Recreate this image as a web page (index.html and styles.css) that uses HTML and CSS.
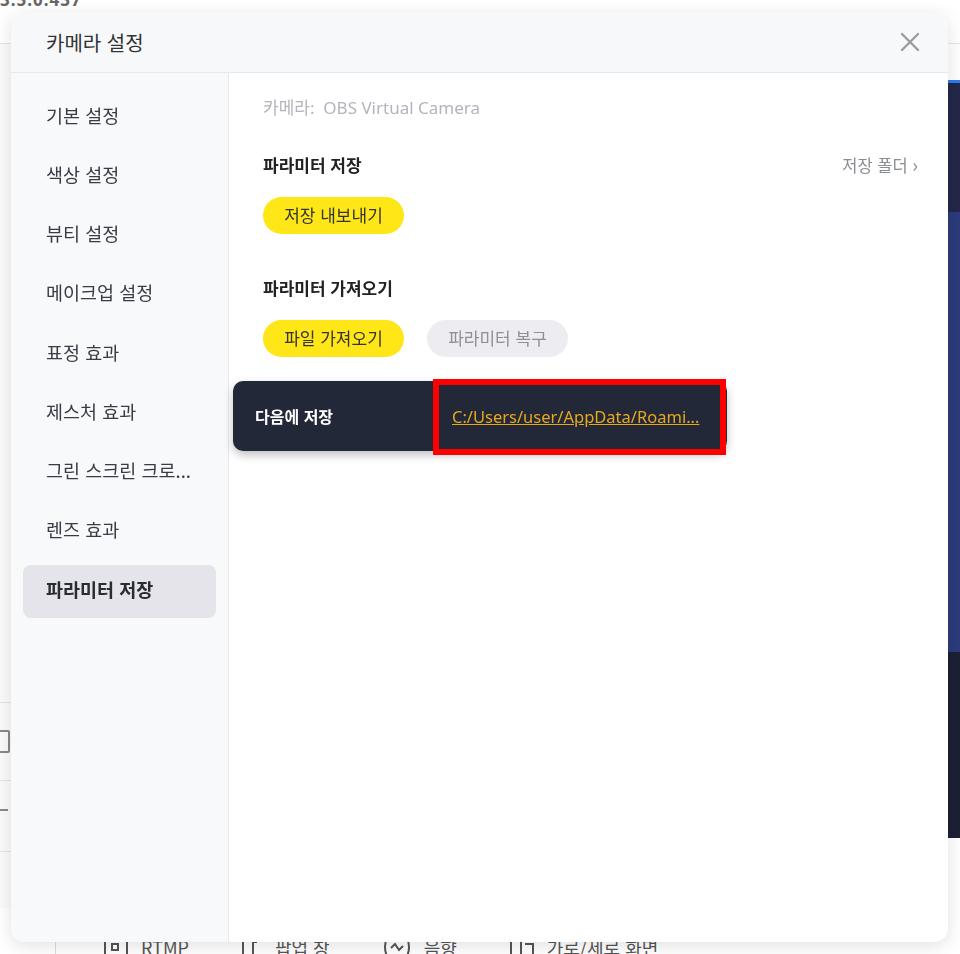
FILE: index.html
```html
<!DOCTYPE html>
<html lang="ko">

<head>
    <meta charset="UTF-8">
    <meta name="viewport" content="width=device-width, initial-scale=1.0">
    <title>카메라 설정</title>
    <link rel="stylesheet" href="styles.css">
</head>

<body>
    <!-- App behind the dialog -->
    <div class="app">
        <div class="app-top">
            <span class="version">3.5.0.437</span>
        </div>
        <div class="app-main">
            <div class="app-left">
                <div class="left-row check-row"><span class="check"></span></div>
                <div class="left-row dash-row"><span class="dash"></span></div>
                <div class="left-row"></div>
            </div>
            <div class="preview">
                <div class="preview-top"></div>
                <div class="preview-mid"></div>
                <div class="preview-low"></div>
            </div>
        </div>
        <div class="app-bottom">
            <span class="tool">
                <svg width="26" height="22" viewBox="0 0 26 22"><path d="M2 2 V20 H24 V2 M9 8 H15 V14 H9 Z" fill="none" stroke="#555" stroke-width="2" /></svg>
                RTMP
            </span>
            <span class="tool">
                <svg width="22" height="22" viewBox="0 0 22 22"><path d="M2 2 V20 M12 2 V20 M12 6 H16" fill="none" stroke="#555" stroke-width="2" /></svg>
                팝업 창
            </span>
            <span class="tool">
                <svg width="30" height="22" viewBox="0 0 30 22"><path d="M5 2 Q1 11 5 20 M25 2 Q29 11 25 20 M9 12 L13 8 L17 14 L21 10" fill="none" stroke="#555" stroke-width="2" /></svg>
                음향
            </span>
            <span class="tool">
                <svg width="26" height="22" viewBox="0 0 26 22"><path d="M2 2 V20 H12 V2 M16 8 H24 V20" fill="none" stroke="#555" stroke-width="2" /></svg>
                가로/세로 화면
            </span>
        </div>
    </div>

    <!-- Camera settings dialog -->
    <div class="modal">
        <div class="modal-header">
            <span class="modal-title">카메라 설정</span>
            <button class="close-btn" aria-label="닫기">
                <svg width="20" height="20" viewBox="0 0 20 20">
                    <path d="M2 2 L18 18 M18 2 L2 18" stroke="#9a9ca3" stroke-width="2.4" stroke-linecap="round" />
                </svg>
            </button>
        </div>
        <div class="modal-body">
            <ul class="side-menu">
                <li class="menu-item">기본 설정</li>
                <li class="menu-item">색상 설정</li>
                <li class="menu-item">뷰티 설정</li>
                <li class="menu-item">메이크업 설정</li>
                <li class="menu-item">표정 효과</li>
                <li class="menu-item">제스처 효과</li>
                <li class="menu-item">그린 스크린 크로...</li>
                <li class="menu-item">렌즈 효과</li>
                <li class="menu-item active">파라미터 저장</li>
            </ul>
            <div class="content">
                <div class="camera-name">카메라:&nbsp; OBS Virtual Camera</div>

                <div class="section">
                    <div class="section-head">
                        <span class="section-title">파라미터 저장</span>
                        <span class="folder-link">저장 폴더 <span class="chev">›</span></span>
                    </div>
                    <div class="btn-row">
                        <button class="pill yellow">저장 내보내기</button>
                    </div>
                </div>

                <div class="section">
                    <div class="section-head">
                        <span class="section-title">파라미터 가져오기</span>
                    </div>
                    <div class="btn-row">
                        <button class="pill yellow">파일 가져오기</button>
                        <button class="pill grey">파라미터 복구</button>
                    </div>
                </div>
            </div>
        </div>

        <!-- Saved-to tooltip -->
        <div class="save-tip">
            <span class="tip-label">다음에 저장</span>
            <a class="tip-path" href="#">C:/Users/user/AppData/Roami...</a>
        </div>
        <div class="highlight"></div>
    </div>
</body>

</html>
```

FILE: styles.css
```css
* {
    box-sizing: border-box;
}

body {
    margin: 0;
    padding: 0;
    font-family: 'Noto Sans', 'Noto Sans CJK KR', sans-serif;
    color: #333;
    overflow: hidden;
    background: #fff;
}

/* ---------- background app ---------- */

.app {
    height: 954px;
    display: grid;
    grid-template-rows: 44px 1fr 46px;
}

.app-top {
    border-bottom: 1px solid #e6e6e8;
}

.version {
    display: block;
    margin-top: -12px;
    font-size: 17px;
    font-weight: bold;
    color: #666;
    letter-spacing: 1px;
}

.app-main {
    display: grid;
    grid-template-columns: 1fr 480px;
}

.app-left {
    background: #fafafb;
    padding-top: 658px;
}

.left-row {
    border-top: 1px solid #e4e4e6;
    display: flex;
    align-items: center;
}

.check-row {
    height: 78px;
}

.dash-row {
    height: 71px;
}

.check {
    width: 14px;
    height: 23px;
    margin-left: -4px;
    border: 2px solid #888;
    border-radius: 2px;
}

.dash {
    width: 8px;
    height: 2px;
    background: #888;
    margin-top: -12px;
}

.preview {
    padding-top: 36px;
    display: flex;
    flex-direction: column;
}

.preview-top {
    height: 132px;
    background: #23284a;
    border-top: 3px solid #2f7ce6;
}

.preview-mid {
    height: 440px;
    background: #2c3b7b;
}

.preview-low {
    height: 186px;
    background: #1d1f36;
}

.app-bottom {
    border-left: 1px solid #ddd;
    margin-left: 55px;
    display: flex;
    gap: 52px;
    padding-left: 47px;
    padding-top: 26px;
    font-family: 'Noto Sans CJK KR', sans-serif;
    font-size: 18px;
    color: #555;
}

.tool {
    display: flex;
    align-items: center;
    gap: 12px;
    height: 26px;
}

/* ---------- dialog ---------- */

.modal {
    position: fixed;
    left: 11px;
    top: 12px;
    width: 937px;
    height: 930px;
    background: #fff;
    border-radius: 14px;
    box-shadow: 0 4px 18px rgba(0, 0, 0, 0.12);
    overflow: hidden;
    display: grid;
    grid-template-rows: 61px 1fr;
}

.modal-header {
    display: flex;
    align-items: center;
    justify-content: space-between;
    padding: 0 28px 0 35px;
    background: #f7f8fa;
    border-bottom: 1px solid #e7e8ec;
}

.modal-title {
    font-family: 'Noto Sans CJK KR', sans-serif;
    font-size: 20px;
    color: #333;
}

.close-btn {
    background: none;
    border: none;
    padding: 0;
    cursor: pointer;
    display: flex;
}

.modal-body {
    display: grid;
    grid-template-columns: 218px 1fr;
}

.side-menu {
    list-style: none;
    margin: 0;
    padding: 18px 12px 0;
    background: #f8f9fb;
    border-right: 1px solid #e7e8ec;
}

.menu-item {
    height: 53px;
    margin-bottom: 6.25px;
    padding: 0 0 6px 23px;
    display: flex;
    align-items: center;
    font-family: 'Noto Sans CJK KR', sans-serif;
    font-size: 18.5px;
    color: #3a3c45;
    border-radius: 8px;
    white-space: nowrap;
}

.menu-item.active {
    background: #e4e4ea;
    font-weight: bold;
    color: #2a2c33;
    margin-top: 2px;
}

.content {
    padding: 22px 30px 0 34px;
}

.camera-name {
    font-size: 17px;
    color: #b3b5bd;
    line-height: 26px;
}

.section {
    margin-top: 30px;
}

.section + .section {
    margin-top: 41px;
}

.section-head {
    display: flex;
    justify-content: space-between;
    align-items: center;
    line-height: 26px;
}

.section-title {
    font-family: 'Noto Sans CJK KR', sans-serif;
    font-size: 17px;
    font-weight: bold;
    color: #222;
}

.folder-link {
    font-family: 'Noto Sans CJK KR', sans-serif;
    font-size: 16.5px;
    color: #8a8c93;
}

.chev {
    font-size: 19px;
    color: #8a8c93;
}

.btn-row {
    display: flex;
    gap: 23px;
    margin-top: 19px;
}

.pill {
    height: 37px;
    width: 141px;
    border: none;
    border-radius: 19px;
    font-family: 'Noto Sans CJK KR', sans-serif;
    font-size: 17px;
    padding: 0 0 2px;
    cursor: pointer;
}

.pill.yellow {
    background: #ffe617;
    color: #333;
}

.pill.grey {
    background: #ececf1;
    color: #8e9097;
}

/* ---------- tooltip + highlight ---------- */

.save-tip {
    position: absolute;
    left: 222px;
    top: 369px;
    width: 494px;
    height: 70px;
    background: #222838;
    border-radius: 10px;
    box-shadow: 0 4px 10px rgba(0, 0, 0, 0.25);
    display: flex;
    align-items: center;
    padding-left: 22px;
}

.tip-label {
    width: 197px;
    font-family: 'Noto Sans CJK KR', sans-serif;
    font-size: 16px;
    font-weight: bold;
    color: #fff;
}

.tip-path {
    font-size: 16.5px;
    color: #e8a81c;
    text-decoration: underline;
    white-space: nowrap;
}

.highlight {
    position: absolute;
    left: 422px;
    top: 367px;
    width: 293px;
    height: 76px;
    border: 6px solid #ff0000;
}
```
